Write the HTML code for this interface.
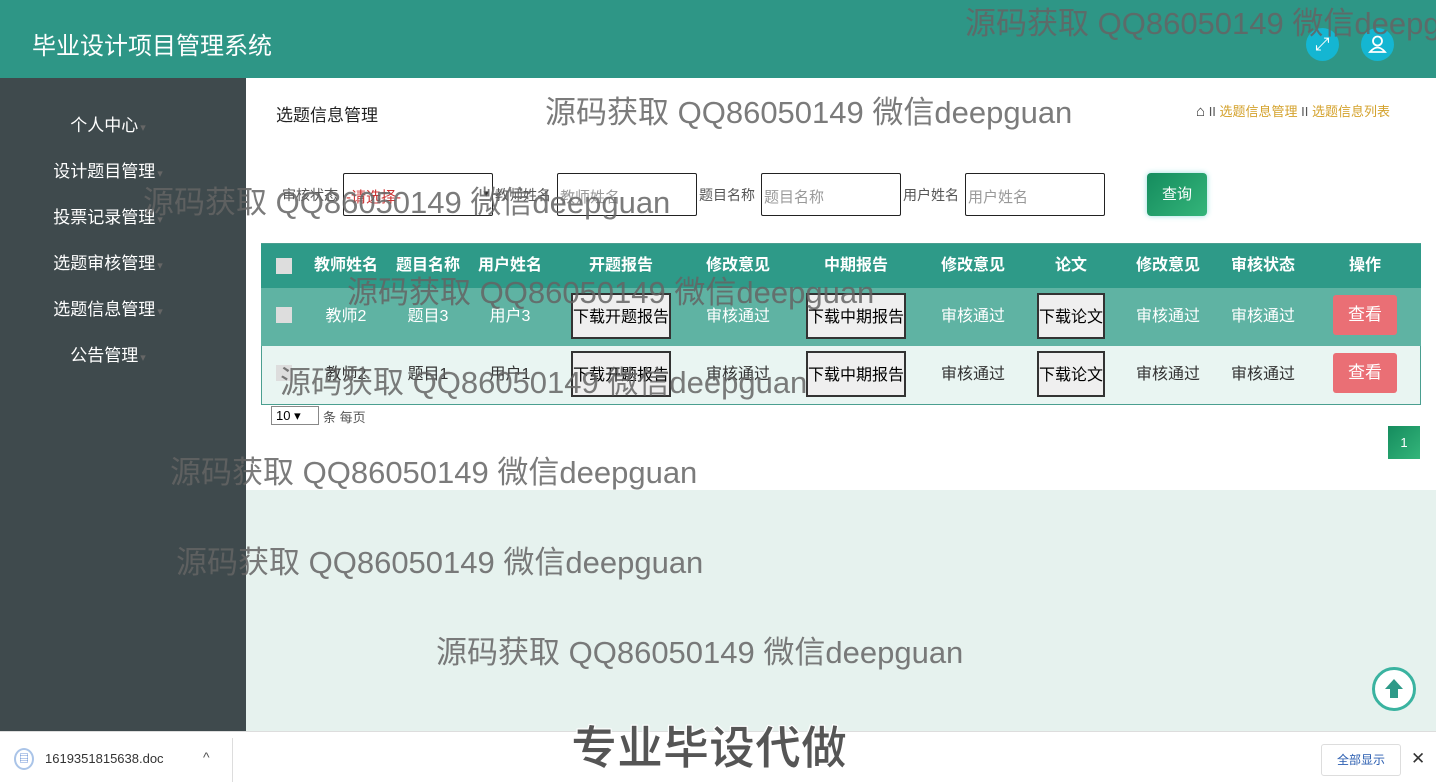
<!DOCTYPE html>
<html><head><meta charset="utf-8"><style>
*{margin:0;padding:0;box-sizing:border-box}
body{width:1436px;height:782px;overflow:hidden;position:relative;font-family:"Liberation Sans","Noto Sans CJK SC",sans-serif;background:#fff}
.a{position:absolute;white-space:nowrap}
.wm{position:absolute;white-space:nowrap;font-size:31px;color:rgba(100,100,100,.85);font-family:"Liberation Sans","Noto Sans CJK SC",sans-serif;z-index:20}
.nav{position:absolute;color:#fff;font-size:17px;left:0;width:216px;text-align:center}
.nav:after{content:"▾";font-size:11px;color:#666;margin-left:2px}
.th{position:absolute;top:244px;height:44px;line-height:44px;color:#fff;font-weight:bold;font-size:16px;transform:translateX(-50%)}
.td{position:absolute;font-size:16px;transform:translateX(-50%)}
.btn{position:absolute;height:46px;border:2px solid #333;background:#efefef;font-size:16px;line-height:46px;text-align:center;color:#000;transform:translateX(-50%)}
.red{position:absolute;width:64px;height:40px;background:#ea6f75;color:#fff;font-size:17px;line-height:40px;text-align:center;border-radius:3px;left:1333px}
.cb{position:absolute;left:276px;width:16px;height:16px;background:#ddd}
.in{position:absolute;top:173px;height:43px;border:1px solid #222;border-radius:2px;background:#fff;font-size:15px;color:#999;padding:12px 2px 0}
.lb{position:absolute;top:185px;font-size:14px;color:#555}
</style></head><body>
<div class="a" style="left:0;top:0;width:1436px;height:78px;background:#2e9686"></div>
<div class="a" style="left:32px;top:26px;color:#fff;font-size:24px">毕业设计项目管理系统</div>
<div class="a" style="left:1306px;top:28px;width:33px;height:33px;border-radius:50%;background:#14b6d2;color:#fff;text-align:center;line-height:33px;font-size:18px">⤢</div>
<div class="a" style="left:1361px;top:28px;width:33px;height:33px;border-radius:50%;background:#14b6d2"><svg width="33" height="33"><circle cx="16.5" cy="13" r="4.5" fill="none" stroke="#fff" stroke-width="1.8"/><path d="M9 24 Q16.5 15 24 24 Z" fill="none" stroke="#fff" stroke-width="1.8"/></svg></div>

<div class="a" style="left:0;top:78px;width:246px;height:653px;background:#3f4a4d"></div>
<div class="nav" style="top:111px">个人中心</div>
<div class="nav" style="top:157px">设计题目管理</div>
<div class="nav" style="top:203px">投票记录管理</div>
<div class="nav" style="top:249px">选题审核管理</div>
<div class="nav" style="top:295px">选题信息管理</div>
<div class="nav" style="top:341px">公告管理</div>

<div class="a" style="left:246px;top:490px;width:1190px;height:241px;background:#e6f2ee"></div>
<div class="a" style="left:276px;top:101px;font-size:17px;color:#222">选题信息管理</div>
<div class="a" style="left:1196px;top:101px;font-size:13px;color:#d4a22c"><span style="color:#333;font-size:15px">⌂</span> <span style="color:#555">II</span> 选题信息管理 <span style="color:#555">II</span> 选题信息列表</div>

<div class="lb" style="left:282px">审核状态</div>
<div class="in" style="left:343px;width:150px;color:#c33">-请选择-<span style="position:absolute;right:3px;top:13px;color:#333;font-size:11px">▾</span></div>
<div class="lb" style="left:495px">教师姓名</div>
<div class="in" style="left:557px;width:140px">教师姓名</div>
<div class="lb" style="left:699px">题目名称</div>
<div class="in" style="left:761px;width:140px">题目名称</div>
<div class="lb" style="left:903px">用户姓名</div>
<div class="in" style="left:965px;width:140px">用户姓名</div>
<div class="a" style="left:1147px;top:173px;width:60px;height:43px;border-radius:4px;background:linear-gradient(135deg,#158c5e,#34b57a);color:#fff;font-size:15px;text-align:center;line-height:43px;box-shadow:0 0 6px #9dd">查询</div>

<div class="a" style="left:261px;top:243px;width:1160px;height:162px;border:1px solid #4a9f90"></div>
<div class="a" style="left:261px;top:244px;width:1160px;height:44px;background:#2e9a88"></div>
<div class="a" style="left:261px;top:288px;width:1160px;height:58px;background:#5fb3a3"></div>
<div class="a" style="left:262px;top:346px;width:1158px;height:58px;background:#e9f5f2"></div>
<div class="cb" style="top:258px"></div><div class="cb" style="top:307px"></div><div class="cb" style="top:365px"></div>
<div class="th" style="left:346px">教师姓名</div><div class="th" style="left:428px">题目名称</div><div class="th" style="left:510px">用户姓名</div><div class="th" style="left:621px">开题报告</div><div class="th" style="left:738px">修改意见</div><div class="th" style="left:856px">中期报告</div><div class="th" style="left:973px">修改意见</div><div class="th" style="left:1071px">论文</div><div class="th" style="left:1168px">修改意见</div><div class="th" style="left:1263px">审核状态</div><div class="th" style="left:1365px">操作</div>

<div style="color:#fff">
<div class="td" style="left:346px;top:302px">教师2</div><div class="td" style="left:428px;top:302px">题目3</div><div class="td" style="left:510px;top:302px">用户3</div>
<div class="td" style="left:738px;top:302px">审核通过</div><div class="td" style="left:973px;top:302px">审核通过</div><div class="td" style="left:1168px;top:302px">审核通过</div><div class="td" style="left:1263px;top:302px">审核通过</div>
</div>
<div style="color:#333">
<div class="td" style="left:346px;top:360px">教师2</div><div class="td" style="left:428px;top:360px">题目1</div><div class="td" style="left:510px;top:360px">用户1</div>
<div class="td" style="left:738px;top:360px">审核通过</div><div class="td" style="left:973px;top:360px">审核通过</div><div class="td" style="left:1168px;top:360px">审核通过</div><div class="td" style="left:1263px;top:360px">审核通过</div>
</div>
<div class="btn" style="left:621px;top:293px;width:100px">下载开题报告</div><div class="btn" style="left:856px;top:293px;width:100px">下载中期报告</div><div class="btn" style="left:1071px;top:293px;width:68px">下载论文</div>
<div class="btn" style="left:621px;top:351px;width:100px">下载开题报告</div><div class="btn" style="left:856px;top:351px;width:100px">下载中期报告</div><div class="btn" style="left:1071px;top:351px;width:68px">下载论文</div>
<div class="red" style="top:295px">查看</div><div class="red" style="top:353px">查看</div>

<div class="a" style="left:271px;top:406px;width:48px;height:19px;border:1px solid #888;font-size:13px;padding-left:4px;line-height:17px">10 ▾</div>
<div class="a" style="left:323px;top:407px;font-size:13px;color:#555">条 每页</div>
<div class="a" style="left:1388px;top:426px;width:32px;height:33px;background:linear-gradient(135deg,#158c5e,#34b57a);color:#fff;font-size:13px;text-align:center;line-height:33px">1</div>
<div class="a" style="left:1372px;top:667px;width:44px;height:44px;border-radius:50%;border:3px solid #3ab3a0;background:#fff"><svg width="38" height="38"><path d="M19 9 L28 19 L23 19 L23 28 L15 28 L15 19 L10 19 Z" fill="#2e9a88"/></svg></div>

<div class="a" style="left:0;top:731px;width:1436px;height:51px;background:#fff;border-top:1px solid #ddd"></div>
<div class="a" style="left:14px;top:748px;width:20px;height:22px;border:2px solid #aac4e8;border-radius:50%;font-size:10px;text-align:center;color:#47c">▤</div>
<div class="a" style="left:45px;top:751px;font-size:13px;color:#333">1619351815638.doc</div>
<div class="a" style="left:203px;top:749px;font-size:14px;color:#555">^</div>
<div class="a" style="left:232px;top:738px;width:1px;height:44px;background:#ddd"></div>
<div class="a" style="left:1321px;top:744px;width:80px;height:32px;border:1px solid #ddd;border-radius:3px;font-size:12px;color:#2a5db0;text-align:center;line-height:30px">全部显示</div>
<div class="a" style="left:1411px;top:749px;font-size:17px;color:#333">✕</div>

<div class="wm" style="left:965px;top:-2px">源码获取 QQ86050149 微信deepguan</div>
<div class="wm" style="left:545px;top:87px">源码获取 QQ86050149 微信deepguan</div>
<div class="wm" style="left:143px;top:177px">源码获取 QQ86050149 微信deepguan</div>
<div class="wm" style="left:347px;top:267px">源码获取 QQ86050149 微信deepguan</div>
<div class="wm" style="left:280px;top:357px">源码获取 QQ86050149 微信deepguan</div>
<div class="wm" style="left:170px;top:447px">源码获取 QQ86050149 微信deepguan</div>
<div class="wm" style="left:176px;top:537px">源码获取 QQ86050149 微信deepguan</div>
<div class="wm" style="left:436px;top:627px">源码获取 QQ86050149 微信deepguan</div>
<div class="a" style="left:571px;top:712px;font-size:46px;font-weight:bold;color:#555;-webkit-text-stroke:1px #fff;z-index:30;text-shadow:0 0 2px #fff">专业毕设代做</div>
</body></html>
